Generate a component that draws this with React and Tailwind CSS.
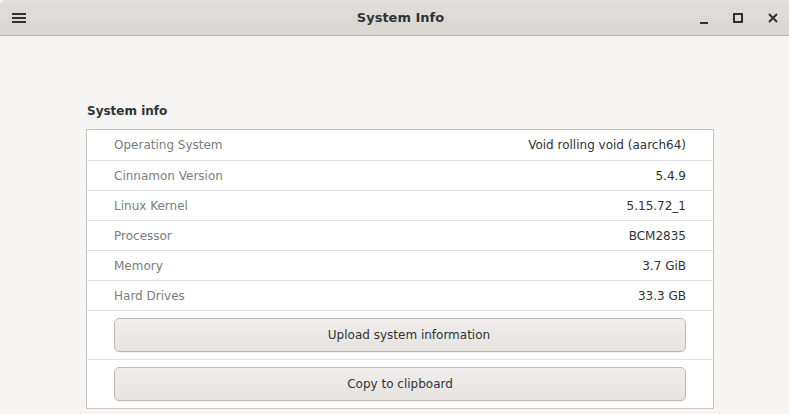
import React from "react";

const rows = [
  ["Operating System", "Void rolling void (aarch64)"],
  ["Cinnamon Version", "5.4.9"],
  ["Linux Kernel", "5.15.72_1"],
  ["Processor", "BCM2835"],
  ["Memory", "3.7 GiB"],
  ["Hard Drives", "33.3 GB"],
];

const font = { fontFamily: '"DejaVu Sans", sans-serif' };

const Button = ({ children, first, shift }) => (
  <div className={`py-[7px] px-[27px] ${first ? "" : "border-t border-[#e4e1de]"}`}>
    <button
      className={`w-full h-[34px] rounded-[5px] border border-[#bfb9b2] bg-gradient-to-b from-[#f0eeec] to-[#e6e3e0] text-[12px] text-[#2e3436] shadow-[0_1px_0_rgba(0,0,0,0.05)] ${shift ? "pl-[18px]" : ""}`}
    >
      {children}
    </button>
  </div>
);

const App = () => {
  return (
    <div className="w-[789px] h-[414px] overflow-hidden bg-[#f6f5f4] flex flex-col" style={font}>
      <div className="h-[36px] shrink-0 flex items-center bg-gradient-to-b from-[#e1dedb] to-[#dad6d2] border-b border-[#bdb5ab] rounded-tl-[6px] relative">
        <div className="w-[36px] flex justify-center pl-[1px]">
          <svg width="14" height="12" viewBox="0 0 14 12">
            <rect x="0" y="1" width="14" height="2" fill="#2e3436" />
            <rect x="0" y="5" width="14" height="2" fill="#2e3436" />
            <rect x="0" y="9" width="14" height="2" fill="#2e3436" />
          </svg>
        </div>
        <div className="absolute left-0 right-0 top-0 h-[35px] flex items-center justify-center pointer-events-none">
          <span className="text-[13px] font-bold text-[#2e3436] pl-[12px]">System Info</span>
        </div>
        <div className="ml-auto flex items-center h-full">
          <div className="w-[34px] flex justify-center pt-[4px]">
            <svg width="10" height="10" viewBox="0 0 10 10">
              <rect x="1" y="7" width="8" height="2" fill="#2e3436" />
            </svg>
          </div>
          <div className="w-[34px] flex justify-center">
            <svg width="10" height="10" viewBox="0 0 10 10">
              <rect x="1" y="1" width="8" height="8" fill="none" stroke="#2e3436" strokeWidth="2" />
            </svg>
          </div>
          <div className="w-[34px] flex justify-center pl-[2px]">
            <svg width="10" height="10" viewBox="0 0 10 10">
              <path d="M1 1 L9 9 M9 1 L1 9" stroke="#2e3436" strokeWidth="2" />
            </svg>
          </div>
        </div>
      </div>

      <div className="pl-[86px] pr-[75px] pt-[68px]">
        <div className="text-[12px] font-bold text-[#2e3436] pl-[1px] h-[25px] leading-[14px]">System info</div>
        <div className="border border-[#c9c4be] bg-white">
          {rows.map(([k, v], i) => (
            <div
              key={k}
              className={`h-[30px] flex items-center justify-between px-[27px] text-[12px] ${i > 0 ? "border-t border-[#e4e1de]" : ""}`}
            >
              <span className="text-[#7b7d7d]">{k}</span>
              <span className="text-[#2e3436]">{v}</span>
            </div>
          ))}
          <div className="border-t border-[#e4e1de]">
            <Button first shift>Upload system information</Button>
            <Button>Copy to clipboard</Button>
          </div>
        </div>
      </div>
    </div>
  );
};

export default App;
